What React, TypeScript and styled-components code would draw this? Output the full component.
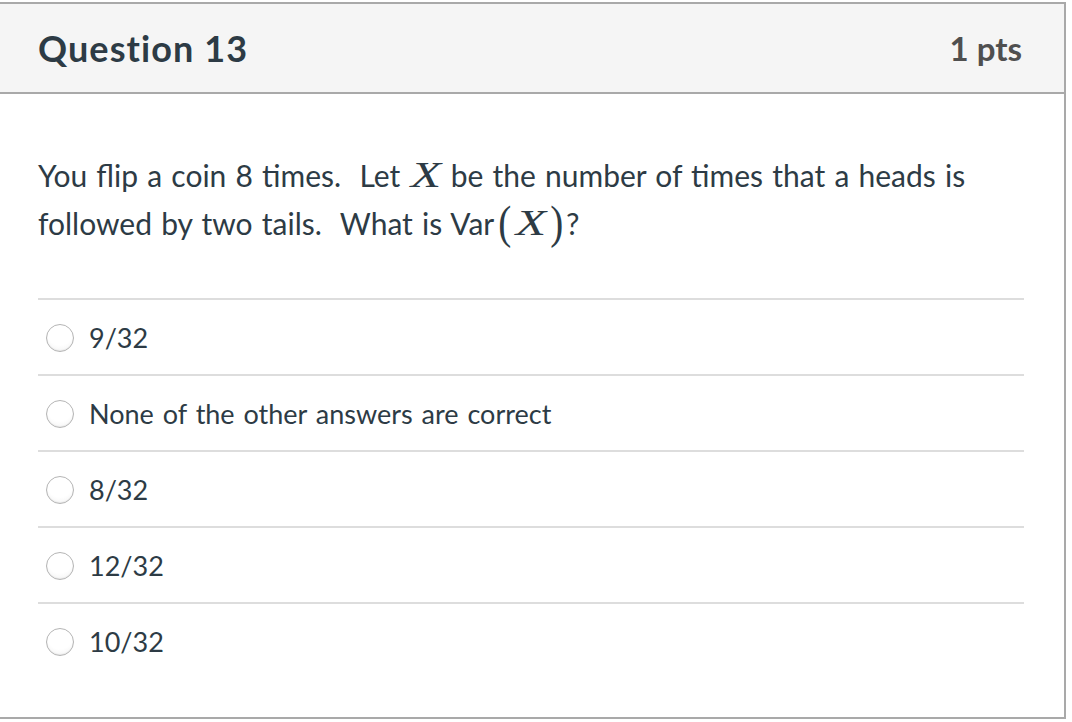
import styled, { createGlobalStyle } from "styled-components";

const GlobalStyle = createGlobalStyle`
  html, body {
    margin: 0;
    padding: 0;
    background: #fff;
  }
  body {
    font-family: Lato, "Open Sans", sans-serif;
    color: #2d3b45;
  }
`;

const answers = [
  "9/32",
  "None of the other answers are correct",
  "8/32",
  "12/32",
  "10/32",
];

const Card = styled.div`
  box-sizing: border-box;
  margin-top: 2px;
  width: 1066px;
  height: 717px;
  border: 2px solid #a9a9a9;
  border-left: none;
  background: #fff;
`;

const Header = styled.div`
  display: flex;
  align-items: center;
  justify-content: space-between;
  height: 88px;
  padding: 0 42px 0 38px;
  background: #f5f5f5;
  border-bottom: 2px solid #a9a9a9;
`;

const Title = styled.h2`
  margin: 0;
  font-size: 36px;
  font-weight: 700;
  letter-spacing: 1.1px;
  color: #2d3b45;
`;

const Points = styled.span`
  font-size: 33px;
  font-weight: 700;
  color: #4f4f4f;
`;

const Body = styled.div`
  padding: 57px 40px 0 38px;
`;

const Question = styled.p`
  margin: 0 0 51px;
  font-size: 30px;
  line-height: 48px;
  word-spacing: 1.5px;
`;

const MathVar = styled.span`
  display: inline-block;
  width: 32px;
  text-align: center;
  font-family: "Liberation Serif", "Times New Roman", serif;
  font-style: italic;
  font-size: 36px;
  line-height: 0;
  transform: scaleX(1.38);
`;

const Paren = styled.span<{ $side: "l" | "r" }>`
  display: inline-block;
  margin: ${(p) => (p.$side === "l" ? "0 2px 0 3px" : "0 2px 0 2px")};
  font-family: "Liberation Serif", "Times New Roman", serif;
  font-size: 46px;
  line-height: 0;
  vertical-align: -3px;
  transform: scaleX(0.85);
`;

const AnswerList = styled.ul`
  list-style: none;
  margin: 0;
  padding: 0;
`;

const AnswerRow = styled.li`
  display: flex;
  align-items: center;
  gap: 15px;
  height: 74px;
  padding-left: 8px;
  border-top: 2px solid #dddddd;
`;

const Radio = styled.span`
  box-sizing: border-box;
  width: 28px;
  height: 28px;
  margin-top: 2px;
  border-radius: 50%;
  border: 1px solid #b5b5b5;
  background: radial-gradient(circle at 50% 30%, #ffffff 55%, #f0f0f0 100%);
  box-shadow: inset 0 -1px 1px rgba(0, 0, 0, 0.06);
`;

const AnswerText = styled.span`
  font-size: 27px;
  word-spacing: 2px;
  color: #2d3b45;
`;

export default function App() {
  return (
    <>
      <GlobalStyle />
      <Card>
        <Header>
          <Title>Question 13</Title>
          <Points>1 pts</Points>
        </Header>
        <Body>
          <Question>
            You flip a coin 8 times.&nbsp; Let <MathVar>X</MathVar> be the
            number of times that a heads is followed by two tails.&nbsp; What
            is Var<Paren $side="l">(</Paren>
            <MathVar>X</MathVar>
            <Paren $side="r">)</Paren>?
          </Question>
          <AnswerList>
            {answers.map((a) => (
              <AnswerRow key={a}>
                <Radio />
                <AnswerText>{a}</AnswerText>
              </AnswerRow>
            ))}
          </AnswerList>
        </Body>
      </Card>
    </>
  );
}
